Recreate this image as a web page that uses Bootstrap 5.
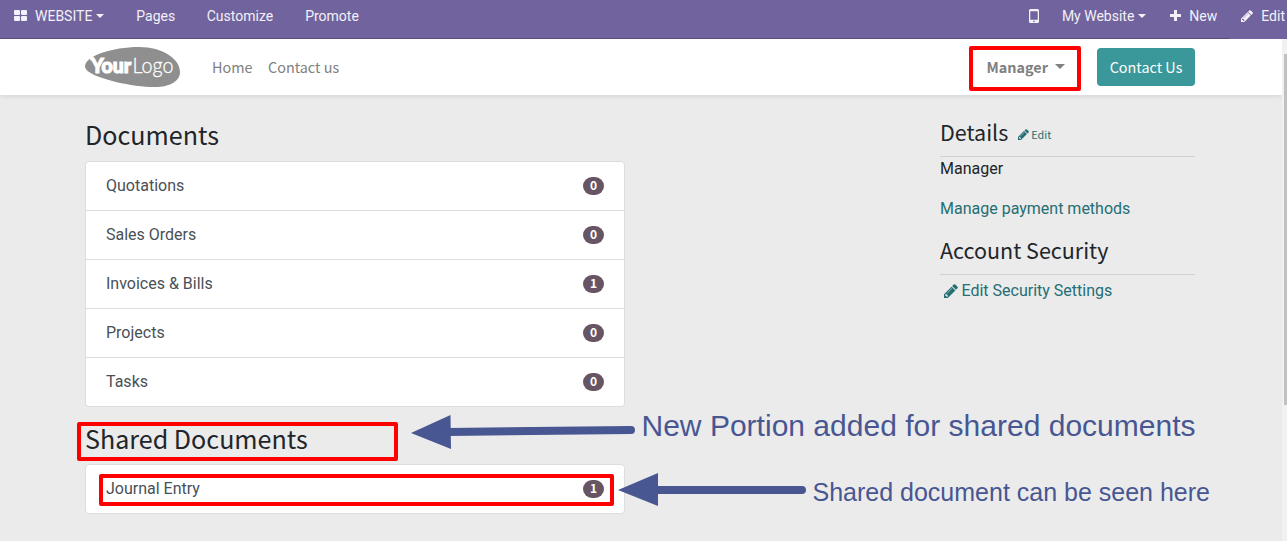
<!DOCTYPE html>
<html lang="en">
<head>
<meta charset="utf-8">
<meta name="viewport" content="width=device-width, initial-scale=1">
<title>My Portal</title>
<link href="https://cdn.jsdelivr.net/npm/bootstrap@5.3.0/dist/css/bootstrap.min.css" rel="stylesheet">
<style>
  body { font-family: Roboto, "Liberation Sans", sans-serif; font-size: 16px; line-height: 24px; color: #212529; background: #ebebeb; height: 541px; overflow: hidden; }
  .editor-bar { height: 39px; background: #71639e; font-size: 14px; color: #f3f1f7; line-height: 32px; }
  .editor-bar a { color: inherit; text-decoration: none; white-space: nowrap; }
  .editor-bar::after { content: ""; position: absolute; left: 0; bottom: 0; width: 1229px; height: 1px; background: #5a4a80; }
  .tri { display: inline-block; width: 0; height: 0; border: 4px solid transparent; border-top-color: currentColor; border-bottom: 0; vertical-align: 3px; margin-left: 4px; }
  .source { font-family: "Noto Sans CJK SC", "Noto Sans", sans-serif; }
  .page-area { width: 1282px; }
  .site-head { height: 56px; background: #fff; box-shadow: 0 2px 4px rgba(0,0,0,.075); }
  .wrap { width: 1140px; margin-left: 70px; padding: 0 15px; }
  .site-head a { color: #808080; text-decoration: none; font-size: 14.4px; white-space: nowrap; }
  .site-head .cta { background: #3a979a; color: #fff; border-radius: 4px; width: 98px; height: 38px; line-height: 38px; text-align: center; }
  .portal { --bs-gutter-x: 30px; }
  h3.source { font-size: 25.1px; line-height: 34px; font-weight: 400; margin: 0; }
  h4.source { font-size: 21.5px; line-height: 29px; font-weight: 400; margin: 0; }
  .list-group { --bs-list-group-border-radius: 4px; --bs-list-group-border-color: #dcdddd; --bs-list-group-item-padding-x: 20px; --bs-list-group-item-padding-y: 12px; --bs-list-group-color: #495057; --bs-list-group-action-color: #495057; }
  .list-group .badge { background: #685563; font: 700 12px/12px "Noto Sans CJK SC", sans-serif; width: 21px; height: 18px; padding: 2px 0 4px; border-radius: 10px; }
  .teal, .teal a { color: #256e74; text-decoration: none; }
  .edit-link { font-size: 10.8px; line-height: 20px; margin: 7px 0 0 10px; }
  .rule { height: 1px; background: #d0d1d1; }
  .scroll-track { right: 0; top: 39px; width: 5px; height: 502px; background: #f1f1f1; }
  .scroll-thumb { margin: 15px 0 0 2px; width: 3px; height: 351px; background: #c1c1c1; }
  .notes { left: 0; top: 0; pointer-events: none; }
</style>
</head>
<body class="position-relative">
<svg width="0" height="0" class="position-absolute">
  <symbol id="pencil" viewBox="128 128 1536 1536"><path fill="currentColor" d="M491 1536l91-91-235-235-91 91v107h128v128h107zm523-928q0-22-22-22-10 0-17 7l-542 542q-7 7-7 17 0 22 22 22 10 0 17-7l542-542q7-7 7-17zm-54-192l416 416-832 832h-416v-416zm683 96q0 53-37 90l-166 166-416-416 166-165q36-38 90-38 53 0 91 38l235 234q37 39 37 91z"/></symbol>
</svg>

<nav class="editor-bar position-relative d-flex justify-content-between overflow-hidden">
  <div class="d-flex">
    <a href="#" class="d-flex" style="margin-left:14px">
      <svg width="13" height="11" class="me-2" style="margin-top:10px" fill="currentColor"><rect width="6" height="5" rx="1"/><rect x="7" width="6" height="5" rx="1"/><rect y="6" width="6" height="5" rx="1"/><rect x="7" y="6" width="6" height="5" rx="1"/></svg>
      <span>WEBSITE<i class="tri"></i></span></a>
    <a href="#" style="margin-left:32px">Pages</a>
    <a href="#" style="margin-left:31.500px">Customize</a>
    <a href="#" style="margin-left:32px">Promote</a>
  </div>
  <div class="d-flex">
    <a href="#" class="d-flex" style="margin:9px 23px 0 0"><svg width="10" height="14" viewBox="0 0 10 14"><path fill="currentColor" fill-rule="evenodd" d="M1.500 0h7A1.500 1.500 0 0 1 10 1.500v11A1.500 1.500 0 0 1 8.500 14h-7A1.500 1.500 0 0 1 0 12.500v-11A1.500 1.500 0 0 1 1.500 0zM1.300 2.200v8.600h7.400V2.200zM4.200 12.400a.8.8 0 0 0 1.600 0 .8.8 0 0 0-1.600 0z"/></svg></a>
    <a href="#" style="margin-right:24px">My Website<i class="tri"></i></a>
    <a href="#" class="d-flex" style="margin-right:24px"><svg width="11" height="11" style="margin:10px 8px 0 0"><path fill="currentColor" d="M4 0h3v4h4v3H7v4H4V7H0V4h4z"/></svg>New</a>
    <a href="#" class="d-flex" style="margin-right:2px"><svg width="12" height="12" style="margin:10px 8px 0 0"><use href="#pencil"/></svg>Edit</a>
  </div>
</nav>

<div class="page-area">
  <header class="site-head source">
    <div class="wrap d-flex align-items-center h-100">
      <svg width="95" height="40" viewBox="0 0 95 40">
        <path fill="#8f8f8f" d="M0 19C1 9 27 0 54 0c24 0 41 12 41 25 0 9-10 15-25 15C46 40 14 32 4 25 1 23 0 21 0 19z"/>
        <g fill="#fff"><text x="6" y="25.500" font-family="Lato" font-size="20" font-weight="900" stroke="#fff" stroke-width="1.200" textLength="40" lengthAdjust="spacingAndGlyphs">Your</text>
        <path d="M4 10h5l-3 4z"/>
        <text x="47.500" y="25.500" font-family="Lato" font-size="21" font-weight="300" stroke="#fff" stroke-width=".3" textLength="41" lengthAdjust="spacingAndGlyphs">Logo</text></g>
      </svg>
      <a href="#" style="margin-left:32px">Home</a>
      <a href="#" style="margin-left:15.500px">Contact us</a>
      <a href="#" class="ms-auto fw-bold" style="margin-right:32px">Manager<i class="tri" style="border-width:5px 5px 0;margin-left:7px;vertical-align:4px"></i></a>
      <a href="#" class="cta">Contact Us</a>
    </div>
  </header>

  <main class="wrap">
    <div class="row portal">
      <div class="col-6">
        <h3 class="source" style="padding-top:22px;margin-bottom:10px">Documents</h3>
        <div class="list-group">
          <a href="#" class="list-group-item list-group-item-action d-flex justify-content-between align-items-center">Quotations<span class="badge">0</span></a>
          <a href="#" class="list-group-item list-group-item-action d-flex justify-content-between align-items-center">Sales Orders<span class="badge">0</span></a>
          <a href="#" class="list-group-item list-group-item-action d-flex justify-content-between align-items-center">Invoices &amp; Bills<span class="badge">1</span></a>
          <a href="#" class="list-group-item list-group-item-action d-flex justify-content-between align-items-center">Projects<span class="badge">0</span></a>
          <a href="#" class="list-group-item list-group-item-action d-flex justify-content-between align-items-center">Tasks<span class="badge">0</span></a>
        </div>
        <h3 class="source" style="padding-top:14px;margin-bottom:9px">Shared Documents</h3>
        <div class="list-group">
          <a href="#" class="list-group-item list-group-item-action d-flex justify-content-between align-items-center">Journal Entry<span class="badge">1</span></a>
        </div>
      </div>
      <aside class="col-3 offset-3">
        <div class="d-flex align-items-start" style="padding-top:22px;margin-bottom:10px">
          <h4 class="source">Details</h4>
          <a href="#" class="teal source edit-link"><svg width="11" height="11" style="vertical-align:-1px;margin-right:2px"><use href="#pencil"/></svg>Edit</a>
        </div>
        <div class="rule"></div>
        <div>Manager</div>
        <div class="teal mt-3"><a href="#">Manage payment methods</a></div>
        <h4 class="source" style="margin-top:14px;margin-bottom:10px">Account Security</h4>
        <div class="rule"></div>
        <div class="teal" style="margin:4px 0 0 4px"><a href="#"><svg width="14" height="14" style="vertical-align:-2px;margin-right:3.500px"><use href="#pencil"/></svg>Edit Security Settings</a></div>
      </aside>
    </div>
  </main>
</div>

<div class="scroll-track position-absolute"><div class="scroll-thumb"></div></div>

<!-- callouts laid over the page -->
<svg class="notes position-absolute" width="1287" height="541" font-family="Liberation Sans, sans-serif">
  <g fill="none" stroke="#f00" stroke-width="4" stroke-linejoin="round">
    <rect x="971" y="48" width="108" height="41"/>
    <rect x="79" y="424" width="317" height="35"/>
    <rect x="101" y="476" width="511" height="28"/>
  </g>
  <g fill="#485692" stroke="none">
    <path d="M411 433L450.500 415 451 449z"/>
    <path d="M618 490L658 473V506z"/>
    <path stroke="#485692" stroke-width="8" stroke-linecap="round" d="M448 432L631 430M655 490H802"/>
    <text x="641.500" y="436" font-size="30" textLength="554">New Portion added for shared documents</text>
    <text x="812.500" y="501" font-size="25" textLength="397.500">Shared document can be seen here</text>
  </g>
</svg>
<script src="https://cdn.jsdelivr.net/npm/bootstrap@5.3.0/dist/js/bootstrap.bundle.min.js"></script>
</body>
</html>
